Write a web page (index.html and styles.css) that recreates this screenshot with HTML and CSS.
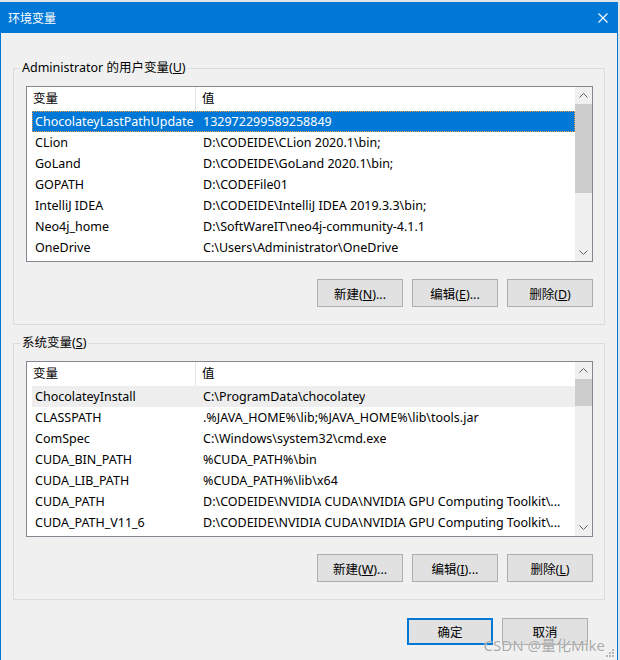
FILE: index.html
```html
<!DOCTYPE html>
<html lang="zh-CN">
<head>
    <meta charset="UTF-8">
    <title>环境变量</title>
    <link rel="stylesheet" href="styles.css">
</head>
<body>
    <div class="window">
        <div class="titlebar">
            <span class="title">环境变量</span>
            <svg class="close" width="10" height="10" viewBox="0 0 10 10">
                <path d="M0.5 0.5 L9.5 9.5 M9.5 0.5 L0.5 9.5" stroke="#fff" stroke-width="1.1" fill="none"/>
            </svg>
        </div>
        <div class="content">
            <fieldset class="group">
                <legend>Administrator 的用户变量(<u>U</u>)</legend>
                <div class="listbox">
                    <div class="list">
                        <div class="list-head"><span class="col-name">变量</span><span class="col-value">值</span></div>
                        <div class="row selected"><span class="col-name">ChocolateyLastPathUpdate</span><span class="col-value">132972299589258849</span></div>
                        <div class="row"><span class="col-name">CLion</span><span class="col-value">D:\CODEIDE\CLion 2020.1\bin;</span></div>
                        <div class="row"><span class="col-name">GoLand</span><span class="col-value">D:\CODEIDE\GoLand 2020.1\bin;</span></div>
                        <div class="row"><span class="col-name">GOPATH</span><span class="col-value">D:\CODEFile01</span></div>
                        <div class="row"><span class="col-name">IntelliJ IDEA</span><span class="col-value">D:\CODEIDE\IntelliJ IDEA 2019.3.3\bin;</span></div>
                        <div class="row"><span class="col-name">Neo4j_home</span><span class="col-value">D:\SoftWareIT\neo4j-community-4.1.1</span></div>
                        <div class="row"><span class="col-name">OneDrive</span><span class="col-value">C:\Users\Administrator\OneDrive</span></div>
                    </div>
                    <div class="scrollbar">
                        <div class="arrow"><svg width="17" height="17" viewBox="0 0 17 17"><path d="M4.5 10.5 L8.5 6.5 L12.5 10.5" stroke="#606060" fill="none"/></svg></div>
                        <div class="track"><div class="thumb" style="height: 89px"></div></div>
                        <div class="arrow"><svg width="17" height="17" viewBox="0 0 17 17"><path d="M4.5 6.5 L8.5 10.5 L12.5 6.5" stroke="#606060" fill="none"/></svg></div>
                    </div>
                </div>
                <div class="buttons">
                    <button>新建(<u>N</u>)...</button>
                    <button>编辑(<u>E</u>)...</button>
                    <button>删除(<u>D</u>)</button>
                </div>
            </fieldset>

            <fieldset class="group group-system">
                <legend>系统变量(<u>S</u>)</legend>
                <div class="listbox">
                    <div class="list">
                        <div class="list-head"><span class="col-name">变量</span><span class="col-value">值</span></div>
                        <div class="row inactive"><span class="col-name">ChocolateyInstall</span><span class="col-value">C:\ProgramData\chocolatey</span></div>
                        <div class="row"><span class="col-name">CLASSPATH</span><span class="col-value">.%JAVA_HOME%\lib;%JAVA_HOME%\lib\tools.jar</span></div>
                        <div class="row"><span class="col-name">ComSpec</span><span class="col-value">C:\Windows\system32\cmd.exe</span></div>
                        <div class="row"><span class="col-name">CUDA_BIN_PATH</span><span class="col-value">%CUDA_PATH%\bin</span></div>
                        <div class="row"><span class="col-name">CUDA_LIB_PATH</span><span class="col-value">%CUDA_PATH%\lib\x64</span></div>
                        <div class="row"><span class="col-name">CUDA_PATH</span><span class="col-value">D:\CODEIDE\NVIDIA CUDA\NVIDIA GPU Computing Toolkit\...</span></div>
                        <div class="row"><span class="col-name">CUDA_PATH_V11_6</span><span class="col-value">D:\CODEIDE\NVIDIA CUDA\NVIDIA GPU Computing Toolkit\...</span></div>
                    </div>
                    <div class="scrollbar">
                        <div class="arrow"><svg width="17" height="17" viewBox="0 0 17 17"><path d="M4.5 10.5 L8.5 6.5 L12.5 10.5" stroke="#606060" fill="none"/></svg></div>
                        <div class="track"><div class="thumb" style="height: 27px"></div></div>
                        <div class="arrow"><svg width="17" height="17" viewBox="0 0 17 17"><path d="M4.5 6.5 L8.5 10.5 L12.5 6.5" stroke="#606060" fill="none"/></svg></div>
                    </div>
                </div>
                <div class="buttons">
                    <button>新建(<u>W</u>)...</button>
                    <button>编辑(<u>I</u>)...</button>
                    <button>删除(<u>L</u>)</button>
                </div>
            </fieldset>

            <div class="dialog-buttons">
                <button class="default">确定</button>
                <button>取消</button>
            </div>
        </div>
        <svg class="grip" width="10" height="10" viewBox="0 0 10 10">
            <rect x="7" y="1" width="2" height="2" fill="#b8b8b8"/>
            <rect x="4" y="4" width="2" height="2" fill="#b8b8b8"/>
            <rect x="7" y="4" width="2" height="2" fill="#b8b8b8"/>
            <rect x="1" y="7" width="2" height="2" fill="#b8b8b8"/>
            <rect x="4" y="7" width="2" height="2" fill="#b8b8b8"/>
            <rect x="7" y="7" width="2" height="2" fill="#b8b8b8"/>
        </svg>
    </div>
    <div class="watermark">CSDN @量化Mike</div>
</body>
</html>
```

FILE: styles.css
```css
body {
    margin: 0;
    background-color: #e4e4e4;
    font-family: "Noto Sans", "Noto Sans CJK SC", sans-serif;
    font-size: 12.5px;
    color: #000;
    position: relative;
    height: 660px;
    overflow: hidden;
}
.window {
    position: relative;
    box-sizing: border-box;
    width: 618px;
    height: 658px;
    margin-top: 2px;
    background-color: #f0f0f0;
    border-left: 1px solid #0078d7;
    border-right: 1px solid #0078d7;
}
.titlebar {
    height: 31px;
    background-color: #0078d7;
    color: #fff;
    display: flex;
    align-items: center;
    justify-content: space-between;
    padding: 0 9px 0 7px;
}
.title {
    font-family: "Noto Sans CJK SC", sans-serif;
    font-size: 12px;
    line-height: 16px;
}
.content {
    padding: 27px 12px 0 12px;
}
.group {
    margin: 0;
    padding: 10px 11px 17px 12px;
    border: 1px solid #dcdcdc;
    min-width: 0;
}
.group legend {
    padding: 0 2px;
    margin-left: -6px;
    line-height: 16px;
    height: 16px;
}
.group-system {
    margin-top: 10px;
}
.listbox {
    display: flex;
    height: 174px;
    background-color: #fff;
    border: 1px solid #828790;
}
.list {
    flex: 1;
    padding-left: 5px;
    overflow: hidden;
}
.list-head {
    display: flex;
    height: 24px;
    line-height: 24px;
}
.list-head .col-name {
    padding-left: 1px;
    border-right: 1px solid #e5e5e5;
}
.list-head .col-value {
    padding-left: 6px;
}
.row {
    display: flex;
    height: 21px;
    line-height: 21px;
    white-space: nowrap;
}
.col-name {
    box-sizing: border-box;
    width: 164px;
    flex-shrink: 0;
    padding-left: 3px;
    overflow: hidden;
}
.col-value {
    padding-left: 7px;
    overflow: hidden;
}
.row.selected {
    background-color: #0078d7;
    color: #fff;
    outline: 1px dotted #f0a040;
    outline-offset: -1px;
}
.row.inactive {
    background-color: #eeeeee;
}
.scrollbar {
    width: 17px;
    display: flex;
    flex-direction: column;
    background-color: #f0f0f0;
}
.arrow {
    height: 17px;
}
.arrow svg {
    display: block;
}
.track {
    flex: 1;
}
.thumb {
    background-color: #cdcdcd;
}
.buttons {
    display: flex;
    justify-content: flex-end;
    gap: 9px;
    margin-top: 17px;
}
button {
    box-sizing: border-box;
    width: 86px;
    height: 28px;
    padding: 0;
    font-family: "Noto Sans", "Noto Sans CJK SC", sans-serif;
    font-size: 12.5px;
    color: #000;
    background-color: #e1e1e1;
    border: 1px solid #adadad;
    border-radius: 0;
}
.dialog-buttons {
    display: flex;
    justify-content: flex-end;
    gap: 9px;
    margin-top: 18px;
    margin-right: 17px;
}
.dialog-buttons button {
    height: 27px;
}
.dialog-buttons .default {
    border: 2px solid #0078d7;
}
.grip {
    position: absolute;
    right: 2px;
    bottom: 2px;
}
.watermark {
    position: absolute;
    right: 15px;
    bottom: 5px;
    font-family: "Noto Sans", "Noto Sans CJK SC", sans-serif;
    font-size: 15px;
    color: rgba(140, 140, 140, 0.75);
    text-shadow: 0 0 1px #fff;
}
```
